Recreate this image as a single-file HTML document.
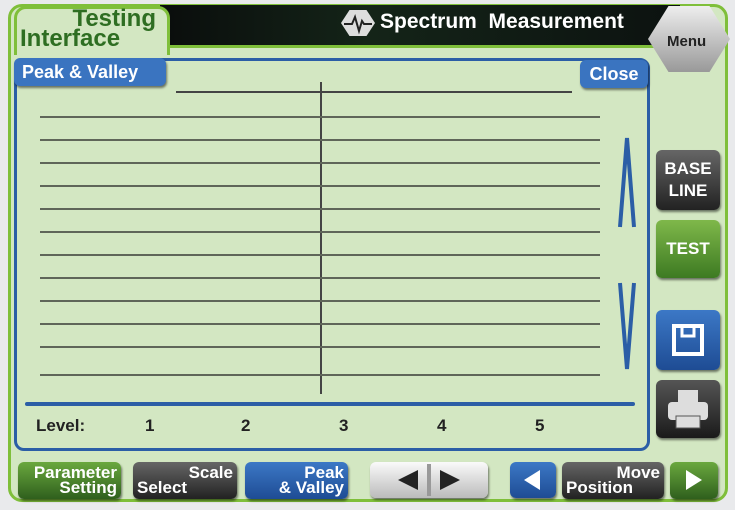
<!DOCTYPE html>
<html><head><style>
body{margin:0;width:735px;height:510px;background:#e9eaec;position:relative;overflow:hidden;font-family:"Liberation Sans",sans-serif}
.a{position:absolute}
.btn{position:absolute;border-radius:6px;color:#fff;font-weight:bold;box-shadow:1px 2px 2px rgba(0,0,0,.5)}
.ln{position:absolute;left:40px;width:560px;height:2px;background:#5f6659}
</style></head><body>
<div class="a" style="left:8px;top:4px;width:720px;height:498px;background:#d3e7c2;border:3px solid #7fbf3a;border-radius:14px;box-sizing:border-box"></div>
<div class="a" style="left:160px;top:5px;width:520px;height:40px;background:linear-gradient(90deg,#0a0d0c,#142418 40%,#0c1210);border-bottom:3px solid #7fbf3a"></div>
<div class="a" style="left:14px;top:6px;width:150px;height:46px;background:#d3e7c2;border:3px solid #7fbf3a;border-bottom:none;border-radius:12px 12px 0 0"></div>
<div class="a" style="left:20px;top:9px;width:136px;font-size:24px;line-height:20px;color:#2e6e22;font-weight:bold;text-align:right"><span style="display:block">Testing</span><span style="display:block;text-align:left">Interface</span></div>
<div class="a" style="left:341px;top:10px;width:34px;height:26px;background:#ddd;clip-path:polygon(25% 0,75% 0,100% 50%,75% 100%,25% 100%,0 50%)"></div>
<svg class="a" style="left:341px;top:10px" width="34" height="26"><path d="M3 14H11L14 7L18 21L21 11L23 14H31" stroke="#222" stroke-width="2" fill="none"/></svg>
<div class="a" style="left:380px;top:10px;color:#fff;font-size:21px;font-weight:bold">Spectrum&nbsp; Measurement</div>
<div class="a" style="left:648px;top:6px;width:82px;height:66px;background:linear-gradient(#eee,#999);clip-path:polygon(25% 0,75% 0,100% 50%,75% 100%,25% 100%,0 50%)"></div>
<div class="a" style="left:667px;top:33px;font-size:15px;font-weight:bold;color:#222">Menu</div>
<div class="a" style="left:14px;top:58px;width:636px;height:393px;border:3px solid #2b5ea6;border-radius:10px;box-sizing:border-box"></div>
<div class="btn" style="left:14px;top:58px;width:152px;height:28px;background:#3a74c0;font-size:18px;line-height:28px;padding-left:8px;box-sizing:border-box">Peak &amp; Valley</div>
<div class="btn" style="left:580px;top:60px;width:68px;height:28px;background:#3a74c0;font-size:18px;line-height:28px;text-align:center">Close</div>
<div class="a" style="left:176px;top:91px;width:396px;height:2px;background:#444"></div>
<div class="a" style="left:320px;top:82px;width:2px;height:312px;background:#444"></div>
<div class="ln" style="top:116px"></div><div class="ln" style="top:139px"></div><div class="ln" style="top:162px"></div><div class="ln" style="top:185px"></div><div class="ln" style="top:208px"></div><div class="ln" style="top:231px"></div><div class="ln" style="top:254px"></div><div class="ln" style="top:277px"></div><div class="ln" style="top:300px"></div><div class="ln" style="top:323px"></div><div class="ln" style="top:346px"></div><div class="ln" style="top:374px"></div>
<svg class="a" style="left:612px;top:135px" width="30" height="240"><path d="M8 92L15 3L22 92" stroke="#2b5ea6" stroke-width="4" fill="none"/><path d="M8 148L15 234L22 148" stroke="#2b5ea6" stroke-width="4" fill="none"/></svg>
<div class="a" style="left:25px;top:402px;width:610px;height:4px;background:#2b5ea6;border-radius:2px"></div>
<div class="a" style="top:416px;left:36px;font-size:17px;font-weight:bold;color:#222">Level:</div>
<div class="a" style="top:416px;left:145px;font-size:17px;font-weight:bold;color:#222">1</div>
<div class="a" style="top:416px;left:241px;font-size:17px;font-weight:bold;color:#222">2</div>
<div class="a" style="top:416px;left:339px;font-size:17px;font-weight:bold;color:#222">3</div>
<div class="a" style="top:416px;left:437px;font-size:17px;font-weight:bold;color:#222">4</div>
<div class="a" style="top:416px;left:535px;font-size:17px;font-weight:bold;color:#222">5</div>
<div class="btn" style="left:656px;top:150px;width:64px;height:60px;background:linear-gradient(#666,#222);font-size:17px;line-height:22px;text-align:center;padding-top:8px;box-sizing:border-box">BASE<br>LINE</div>
<div class="btn" style="left:656px;top:220px;width:64px;height:58px;background:linear-gradient(#7fb84a,#3d7a22);font-size:17px;line-height:58px;text-align:center">TEST</div>
<div class="btn" style="left:656px;top:310px;width:64px;height:60px;background:linear-gradient(#3c78c6,#1e4c94)"><svg width="64" height="60"><path d="M18 16H46V44H18Z" fill="none" stroke="#fff" stroke-width="4"/><path d="M26 16V26H38V16" fill="none" stroke="#fff" stroke-width="3"/></svg></div>
<div class="btn" style="left:656px;top:380px;width:64px;height:58px;background:linear-gradient(#555,#1a1a1a)"><svg width="64" height="58"><rect x="22" y="10" width="20" height="12" fill="#ddd"/><rect x="12" y="22" width="40" height="18" rx="4" fill="#ddd"/><rect x="20" y="36" width="24" height="12" fill="#ddd" stroke="#555"/></svg></div>
<div class="btn" style="left:18px;top:462px;width:103px;height:37px;background:linear-gradient(#6aa83e,#2f5f1d);font-size:17px;line-height:15px;text-align:right;padding:3px 4px;box-sizing:border-box">Parameter<br>Setting</div>
<div class="btn" style="left:133px;top:462px;width:104px;height:37px;background:linear-gradient(#666,#222);font-size:17px;line-height:15px;padding:3px 4px;box-sizing:border-box"><div style="text-align:right">Scale</div>Select</div>
<div class="btn" style="left:245px;top:462px;width:103px;height:37px;background:linear-gradient(#3c78c6,#1e4c94);font-size:17px;line-height:15px;padding:3px 4px;box-sizing:border-box;text-align:right">Peak<br>&amp; Valley</div>
<div class="btn" style="left:370px;top:462px;width:118px;height:36px;background:linear-gradient(#fafafa,#bbb)"><svg width="118" height="36"><path d="M48 8V28L28 18Z" fill="#222"/><path d="M70 8V28L90 18Z" fill="#222"/><rect x="57" y="2" width="4" height="32" fill="#999"/></svg></div>
<div class="btn" style="left:510px;top:462px;width:46px;height:36px;background:linear-gradient(#3c78c6,#1e4c94)"><svg width="46" height="36"><path d="M30 8V28L14 18Z" fill="#fff"/></svg></div>
<div class="btn" style="left:562px;top:462px;width:102px;height:37px;background:linear-gradient(#666,#222);font-size:17px;line-height:15px;padding:3px 4px;box-sizing:border-box"><div style="text-align:right">Move</div>Position</div>
<div class="btn" style="left:670px;top:462px;width:48px;height:37px;background:linear-gradient(#6aa83e,#2f5f1d)"><svg width="48" height="37"><path d="M16 8V28L32 18Z" fill="#fff"/></svg></div>
</body></html>
